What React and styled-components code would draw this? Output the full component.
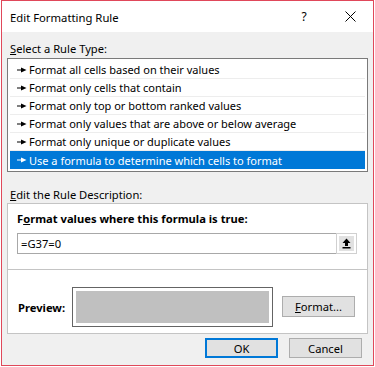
import React from 'react'
import styled, { createGlobalStyle } from 'styled-components'

const GlobalStyle = createGlobalStyle`
  html, body {
    margin: 0;
    padding: 0;
    background: #ffffff;
  }
  body {
    font-family: "Segoe UI", "Noto Sans", "DejaVu Sans", sans-serif;
    font-size: 11.2px;
    color: #000000;
  }
`

const Dialog = styled.div`
  box-sizing: border-box;
  width: 373px;
  height: 366px;
  margin-left: 1px;
  border: 1px solid #e0485a;
  background: #f0f0f0;
  display: flex;
  flex-direction: column;
  overflow: hidden;
`

const TitleBar = styled.div`
  height: 31px;
  background: #ffffff;
  display: flex;
  align-items: center;
  padding-left: 8px;
  flex-shrink: 0;
`

const Title = styled.div`
  flex: 1;
  font-size: 11.3px;
  margin-top: 1px;
`

const TitleButton = styled.div`
  width: 46px;
  height: 31px;
  display: flex;
  align-items: center;
  justify-content: center;
  font-size: 12px;
`

const Body = styled.div`
  flex: 1;
  display: flex;
  flex-direction: column;
  padding: 0 5px;
`

const SectionLabel = styled.div`
  padding-left: 3px;
  height: 15px;
  line-height: 15px;
  margin-top: ${p => p.$top}px;
  margin-bottom: ${p => p.$bottom}px;
`

const ListBox = styled.div`
  border: 1px solid #7a7a7a;
  background: #ffffff;
  padding: 2px;
`

const ListItem = styled.div`
  height: 18px;
  box-sizing: border-box;
  display: flex;
  align-items: center;
  padding-left: 7px;
  gap: 2px;
  font-size: 11px;
  background: ${p => (p.$selected ? '#0078d7' : 'transparent')};
  color: ${p => (p.$selected ? '#ffffff' : '#000000')};
  border-bottom: 1px solid ${p => (p.$selected ? '#0078d7' : '#ededed')};
  &:last-child {
    border-bottom: none;
  }
`

const Panel = styled.div`
  border: 1px solid #c4c4c4;
  background: #ffffff;
  display: flex;
  flex-direction: column;
`

const FormulaSection = styled.div`
  box-sizing: border-box;
  height: 66px;
  border-bottom: 1px solid #c4c4c4;
  padding: 7px 10px 0 9px;
  display: flex;
  flex-direction: column;
`

const BoldLabel = styled.div`
  font-weight: bold;
  height: 16px;
  line-height: 16px;
  margin-bottom: 6px;
`

const FormulaInput = styled.div`
  box-sizing: border-box;
  height: 21px;
  border: 1px solid #a8a8a8;
  display: flex;
  align-items: center;
  justify-content: space-between;
  padding-left: 3px;
`

const Collapse = styled.div`
  box-sizing: border-box;
  width: 19px;
  height: 19px;
  background: #e1e1e1;
  border: 2px solid #ffffff;
  outline: 1px solid #d0d0d0;
  display: flex;
  align-items: center;
  justify-content: center;
`

const PreviewSection = styled.div`
  height: 63px;
  display: flex;
  align-items: flex-start;
  padding: 17px 0 0 10px;
  box-sizing: border-box;
`

const PreviewLabel = styled.div`
  font-weight: bold;
  width: 54px;
  height: 15px;
  line-height: 15px;
  margin-top: 13px;
`

const PreviewBox = styled.div`
  box-sizing: border-box;
  width: 201px;
  height: 40px;
  border: 1px solid #646464;
  padding: 3px;
  &::after {
    content: '';
    display: block;
    height: 100%;
    background: #c0c0c0;
  }
`

const Button = styled.div`
  box-sizing: border-box;
  width: ${p => p.$w || 73}px;
  height: ${p => p.$h || 21}px;
  background: #e1e1e1;
  border: ${p => (p.$default ? '2px solid #0078d7' : '1px solid #adadad')};
  display: flex;
  align-items: center;
  justify-content: center;
  margin-left: ${p => p.$left || 0}px;
  margin-top: ${p => p.$top || 0}px;
`

const Footer = styled.div`
  display: flex;
  justify-content: flex-end;
  gap: 11px;
  padding: 4px 6px 0 0;
`

const Arrow = () => (
  <svg width="10" height="8" viewBox="0 0 10 8">
    <rect x="0" y="3.5" width="5" height="1" fill="currentColor" />
    <path d="M4 1.5 L9.5 4 L4 6.5 Z" fill="currentColor" />
  </svg>
)

const UpIcon = () => (
  <svg width="9" height="11" viewBox="0 0 9 11">
    <path d="M4.5 0.5 L8.5 5 L6 5 L6 8 L3 8 L3 5 L0.5 5 Z" fill="#000" />
    <rect x="0.5" y="9" width="8" height="1.5" fill="#000" />
  </svg>
)

const CloseIcon = () => (
  <svg width="11" height="11" viewBox="0 0 11 11">
    <path d="M0.5 0.5 L10.5 10.5 M10.5 0.5 L0.5 10.5" stroke="#000" strokeWidth="1" />
  </svg>
)

const rules = [
  'Format all cells based on their values',
  'Format only cells that contain',
  'Format only top or bottom ranked values',
  'Format only values that are above or below average',
  'Format only unique or duplicate values',
  'Use a formula to determine which cells to format',
]

export default function App() {
  return (
    <>
      <GlobalStyle />
      <Dialog>
        <TitleBar>
          <Title>Edit Formatting Rule</Title>
          <TitleButton>?</TitleButton>
          <TitleButton><CloseIcon /></TitleButton>
        </TitleBar>
        <Body>
          <SectionLabel $top={9} $bottom={2}><u>S</u>elect a Rule Type:</SectionLabel>
          <ListBox>
            {rules.map((r, i) => (
              <ListItem key={r} $selected={i === rules.length - 1}>
                <Arrow />
                <span>{r}</span>
              </ListItem>
            ))}
          </ListBox>
          <SectionLabel $top={15} $bottom={1}><u>E</u>dit the Rule Description:</SectionLabel>
          <Panel>
            <FormulaSection>
              <BoldLabel>F<u>o</u>rmat values where this formula is true:</BoldLabel>
              <FormulaInput>
                <span>=G37=0</span>
                <Collapse><UpIcon /></Collapse>
              </FormulaInput>
            </FormulaSection>
            <PreviewSection>
              <PreviewLabel>Preview:</PreviewLabel>
              <PreviewBox />
              <Button $left={9} $top={9}><u>F</u>ormat...</Button>
            </PreviewSection>
          </Panel>
          <Footer>
            <Button $default $h={20}>OK</Button>
            <Button $h={20}>Cancel</Button>
          </Footer>
        </Body>
      </Dialog>
    </>
  )
}
